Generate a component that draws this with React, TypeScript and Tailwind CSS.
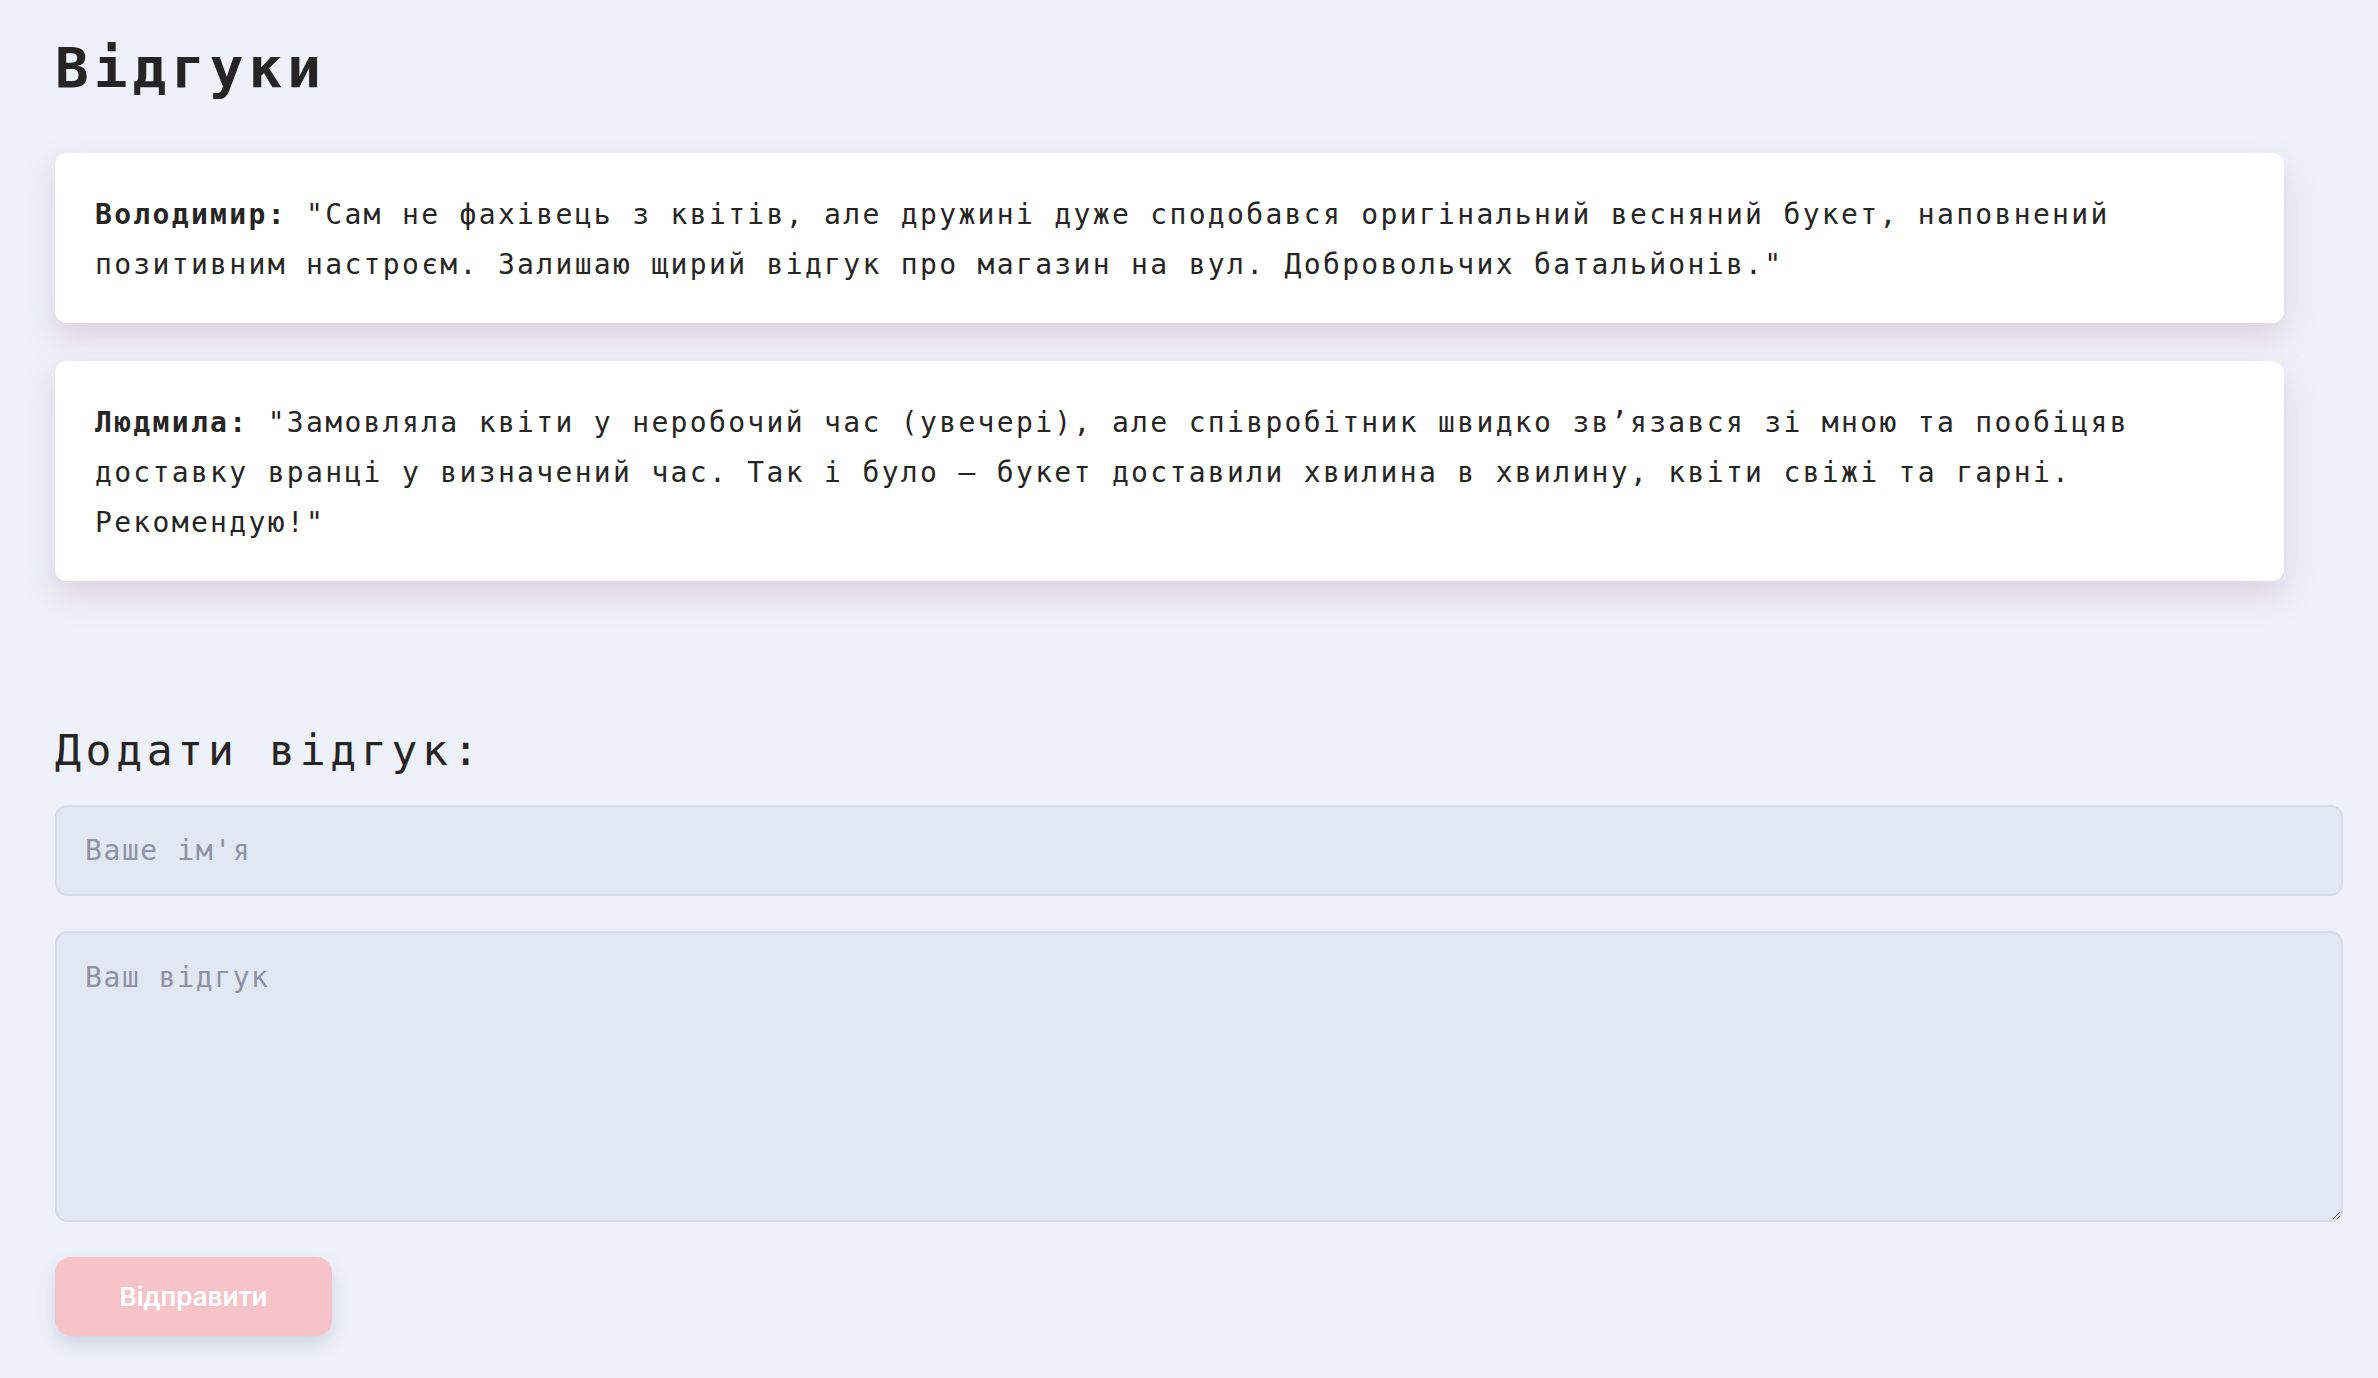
import React from "react";

const mono = "font-['DejaVu_Sans_Mono',monospace]";

export default function App() {
  return (
    <div className={`min-h-screen bg-[#eef1f9] pl-[55px] pr-[35px] pt-[36px] pb-[40px] text-[#262524] ${mono}`}>
      <h1 className="text-[56px] leading-[64px] font-bold tracking-[5px]">Відгуки</h1>

      <div className="mt-[53px] flex w-[2229px] flex-col gap-[38px]">
        <div className="rounded-[12px] bg-white px-[40px] pt-[37px] pb-[33px] shadow-[0_14px_30px_rgba(185,150,175,0.33)]">
          <p className="text-[28px] leading-[50px] tracking-[2.33px]">
            <span className="font-bold">Володимир:</span> "Сам не фахівець з квітів, але дружині дуже сподобався оригінальний весняний букет, наповнений позитивним настроєм. Залишаю щирий відгук про магазин на вул. Добровольчих батальйонів."
          </p>
        </div>
        <div className="rounded-[12px] bg-white px-[40px] pt-[37px] pb-[33px] shadow-[0_14px_30px_rgba(185,150,175,0.33)]">
          <p className="text-[28px] leading-[50px] tracking-[2.33px]">
            <span className="font-bold">Людмила:</span> "Замовляла квіти у неробочий час (увечері), але співробітник швидко зв’язався зі мною та пообіцяв доставку вранці у визначений час. Так і було — букет доставили хвилина в хвилину, квіти свіжі та гарні. Рекомендую!"
          </p>
        </div>
      </div>

      <h2 className="mt-[145px] text-[43px] leading-[48px] font-normal tracking-[4.7px]">Додати відгук:</h2>

      <div className="mt-[31px] flex w-[2288px] flex-col gap-[35px]">
        <input
          type="text"
          placeholder="Ваше ім'я"
          className={`h-[91px] w-full rounded-[12px] border-2 border-[#d6dcea] bg-[#e1e7f3] px-[28px] text-[28px] tracking-[1.6px] text-[#262524] placeholder:text-[#8f91a4] outline-none ${mono}`}
        />
        <textarea
          placeholder="Ваш відгук"
          className={`h-[291px] w-full rounded-[12px] border-2 border-[#d6dcea] bg-[#e1e7f3] px-[28px] pt-[24px] pb-[28px] text-[28px] tracking-[1.6px] text-[#262524] placeholder:text-[#8f91a4] outline-none ${mono}`}
        />
      </div>

      <button
        type="button"
        className="mt-[35px] flex h-[79px] w-[277px] items-center justify-center rounded-[16px] bg-[#f6c3c8] font-['Inter',sans-serif] text-[26px] font-semibold text-white shadow-[0_8px_16px_rgba(140,150,175,0.3)]"
      >
        Відправити
      </button>
    </div>
  );
}
